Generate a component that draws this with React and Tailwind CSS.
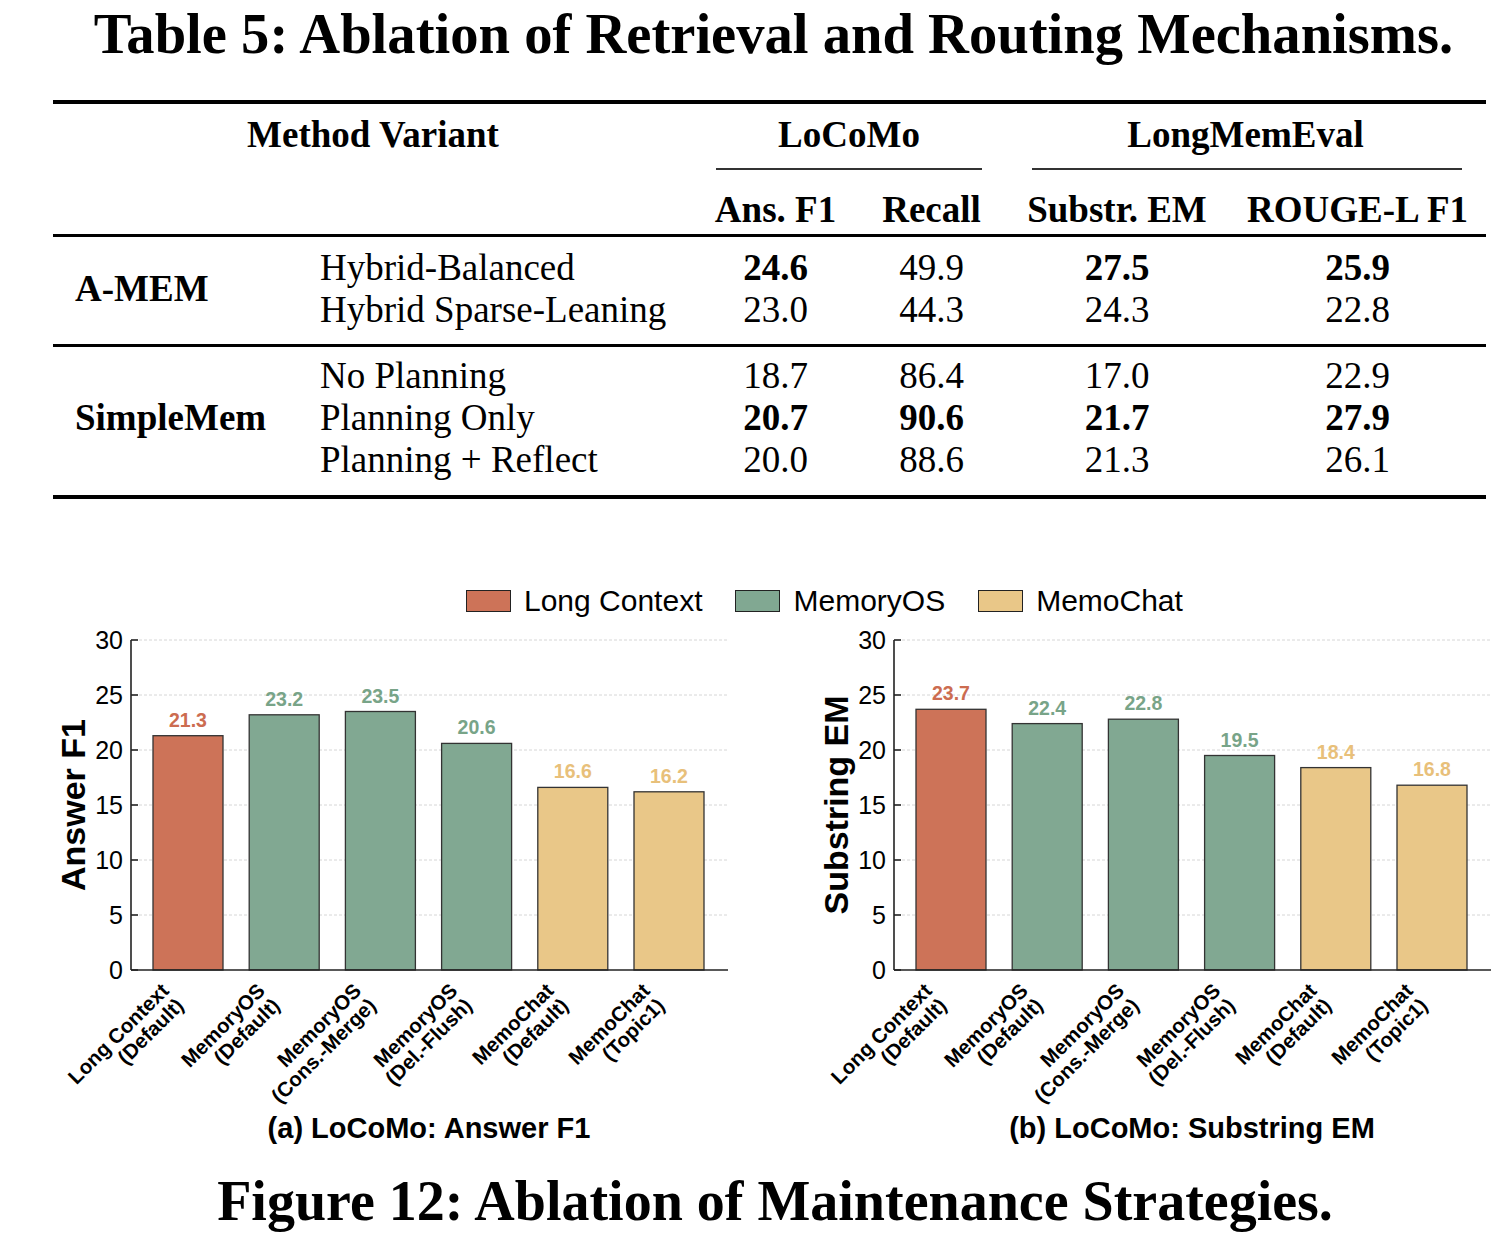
import React from "react";

const G = "grid grid-cols-[245px_395px_165px_147px_224px_257px]";

const LC = "#cd7358";
const OS = "#81a892";
const MC = "#e9c788";
const LCt = "#cc6c50";
const OSt = "#78a488";
const MCt = "#e8c07a";

const cats = [
  { l1: "Long Context", l2: "(Default)", c: LC, t: LCt },
  { l1: "MemoryOS", l2: "(Default)", c: OS, t: OSt },
  { l1: "MemoryOS", l2: "(Cons.-Merge)", c: OS, t: OSt },
  { l1: "MemoryOS", l2: "(Del.-Flush)", c: OS, t: OSt },
  { l1: "MemoChat", l2: "(Default)", c: MC, t: MCt },
  { l1: "MemoChat", l2: "(Topic1)", c: MC, t: MCt },
];

function Chart({ values, ylabel }) {
  const y0 = 345;
  const s = 11;
  const ticks = [0, 5, 10, 15, 20, 25, 30];
  return (
    <svg width="741" height="489" className="block font-['Liberation_Sans',sans-serif]">
      {ticks.slice(1).map((v) => (
        <line key={"g" + v} x1={139} x2={728} y1={y0 - v * s} y2={y0 - v * s} stroke="#d6d6d6" strokeDasharray="3 2" strokeWidth="1" />
      ))}
      {values.map((v, i) => {
        const x = 153 + i * 96.2;
        const top = y0 - v * s;
        return (
          <g key={i}>
            <rect x={x} y={top} width={70} height={v * s} fill={cats[i].c} stroke="#333" strokeWidth="1.3" />
            <text x={x + 35} y={top - 9} textAnchor="middle" fontSize="19.5" fontWeight="bold" fill={cats[i].t}>
              {v.toFixed(1)}
            </text>
            <text transform={`translate(${x + 35 - 18}, ${y0 + 22}) rotate(-45)`} textAnchor="end" fontSize="20.5" fontWeight="bold" fill="#000">
              <tspan x="0" dy="0">{cats[i].l1}</tspan>
              <tspan x="0" dy="21">{cats[i].l2}</tspan>
            </text>
          </g>
        );
      })}
      <line x1={131} x2={131} y1={y0 - 30 * s} y2={y0} stroke="#222" strokeWidth="1.6" />
      <line x1={131} x2={728} y1={y0} y2={y0} stroke="#222" strokeWidth="1.6" />
      {ticks.map((v) => (
        <g key={"t" + v}>
          <line x1={131} x2={138} y1={y0 - v * s} y2={y0 - v * s} stroke="#222" strokeWidth="1.6" />
          <text x={123} y={y0 - v * s + 9} textAnchor="end" fontSize="25" fill="#000">
            {v}
          </text>
        </g>
      ))}
      <text transform="translate(85, 180) rotate(-90)" textAnchor="middle" fontSize="34" fontWeight="bold" fill="#000">
        {ylabel}
      </text>
    </svg>
  );
}

function Num({ v, b }) {
  return <div className={"text-center " + (b ? "font-bold" : "")}>{v}</div>;
}

function LegendItem({ color, label }) {
  return (
    <div className="flex items-center gap-[13px]">
      <div className="h-[22px] w-[45px] border-[1.5px] border-[#222]" style={{ backgroundColor: color }} />
      <span className="text-[30px] leading-[28px] text-black">{label}</span>
    </div>
  );
}

export default function App() {
  return (
    <div className="w-[1504px] h-[1244px] bg-white text-black overflow-hidden">
      <div className="pt-[6px] pl-[43px] text-center font-['Liberation_Serif',serif] text-[56.6px] leading-[57px] font-bold">
        Table 5: Ablation of Retrieval and Routing Mechanisms.
      </div>

      <div className="mt-[37px] ml-[53px] w-[1433px] font-['Liberation_Serif',serif] text-[37px]">
        <div className="h-[4px] bg-black" />
        <div className={G + " pt-[12px] leading-[37px] font-bold"}>
          <div className="col-span-2 text-center">Method Variant</div>
          <div className="col-span-2 text-center">LoCoMo</div>
          <div className="col-span-2 text-center">LongMemEval</div>
        </div>
        <div className={G + " pt-[15px]"}>
          <div className="col-start-3 col-span-2 mx-[23px] h-[2px] bg-[#333]" />
          <div className="col-span-2 ml-[27px] mr-[24px] h-[2px] bg-[#333]" />
        </div>
        <div className={G + " pt-[21px] leading-[37px] font-bold"}>
          <div className="col-span-2" />
          <div className="text-center">Ans. F1</div>
          <div className="text-center">Recall</div>
          <div className="text-center">Substr. EM</div>
          <div className="text-center">ROUGE-L F1</div>
        </div>
        <div className="mt-[6px] h-[3px] bg-black" />

        <div className={G + " pt-[10px] pb-[13px] auto-rows-[42px] leading-[42px]"}>
          <div className="row-span-2 flex items-center pl-[22px] font-bold">A-MEM</div>
          <div className="pl-[22px]">Hybrid-Balanced</div>
          <Num v="24.6" b />
          <Num v="49.9" />
          <Num v="27.5" b />
          <Num v="25.9" b />
          <div className="pl-[22px]">Hybrid Sparse-Leaning</div>
          <Num v="23.0" />
          <Num v="44.3" />
          <Num v="24.3" />
          <Num v="22.8" />
        </div>
        <div className="h-[3px] bg-black" />
        <div className={G + " pt-[8px] pb-[14px] auto-rows-[42px] leading-[42px]"}>
          <div className="row-span-3 flex items-center pl-[22px] font-bold">SimpleMem</div>
          <div className="pl-[22px]">No Planning</div>
          <Num v="18.7" />
          <Num v="86.4" />
          <Num v="17.0" />
          <Num v="22.9" />
          <div className="pl-[22px]">Planning Only</div>
          <Num v="20.7" b />
          <Num v="90.6" b />
          <Num v="21.7" b />
          <Num v="27.9" b />
          <div className="pl-[22px]">Planning + Reflect</div>
          <Num v="20.0" />
          <Num v="88.6" />
          <Num v="21.3" />
          <Num v="26.1" />
        </div>
        <div className="h-[4px] bg-black" />
      </div>

      <div className="mt-[88px] flex h-[28px] items-center gap-[33px] pl-[466px] font-['Liberation_Sans',sans-serif]">
        <LegendItem color={LC} label="Long Context" />
        <LegendItem color={OS} label="MemoryOS" />
        <LegendItem color={MC} label="MemoChat" />
      </div>

      <div className="mt-[10px] flex gap-[22px]">
        <div className="flex w-[741px] flex-col">
          <Chart values={[21.3, 23.2, 23.5, 20.6, 16.6, 16.2]} ylabel="Answer F1" />
          <div className="ml-[131px] w-[596px] text-center font-['Liberation_Sans',sans-serif] text-[29px] leading-[28px] font-bold">
            (a) LoCoMo: Answer F1
          </div>
        </div>
        <div className="flex w-[741px] flex-col">
          <Chart values={[23.7, 22.4, 22.8, 19.5, 18.4, 16.8]} ylabel="Substring EM" />
          <div className="ml-[131px] w-[596px] text-center font-['Liberation_Sans',sans-serif] text-[29px] leading-[28px] font-bold">
            (b) LoCoMo: Substring EM
          </div>
        </div>
      </div>

      <div className="mt-[31px] pl-[46px] text-center font-['Liberation_Serif',serif] text-[56px] leading-[56px] font-bold">
        Figure 12: Ablation of Maintenance Strategies.
      </div>
    </div>
  );
}
